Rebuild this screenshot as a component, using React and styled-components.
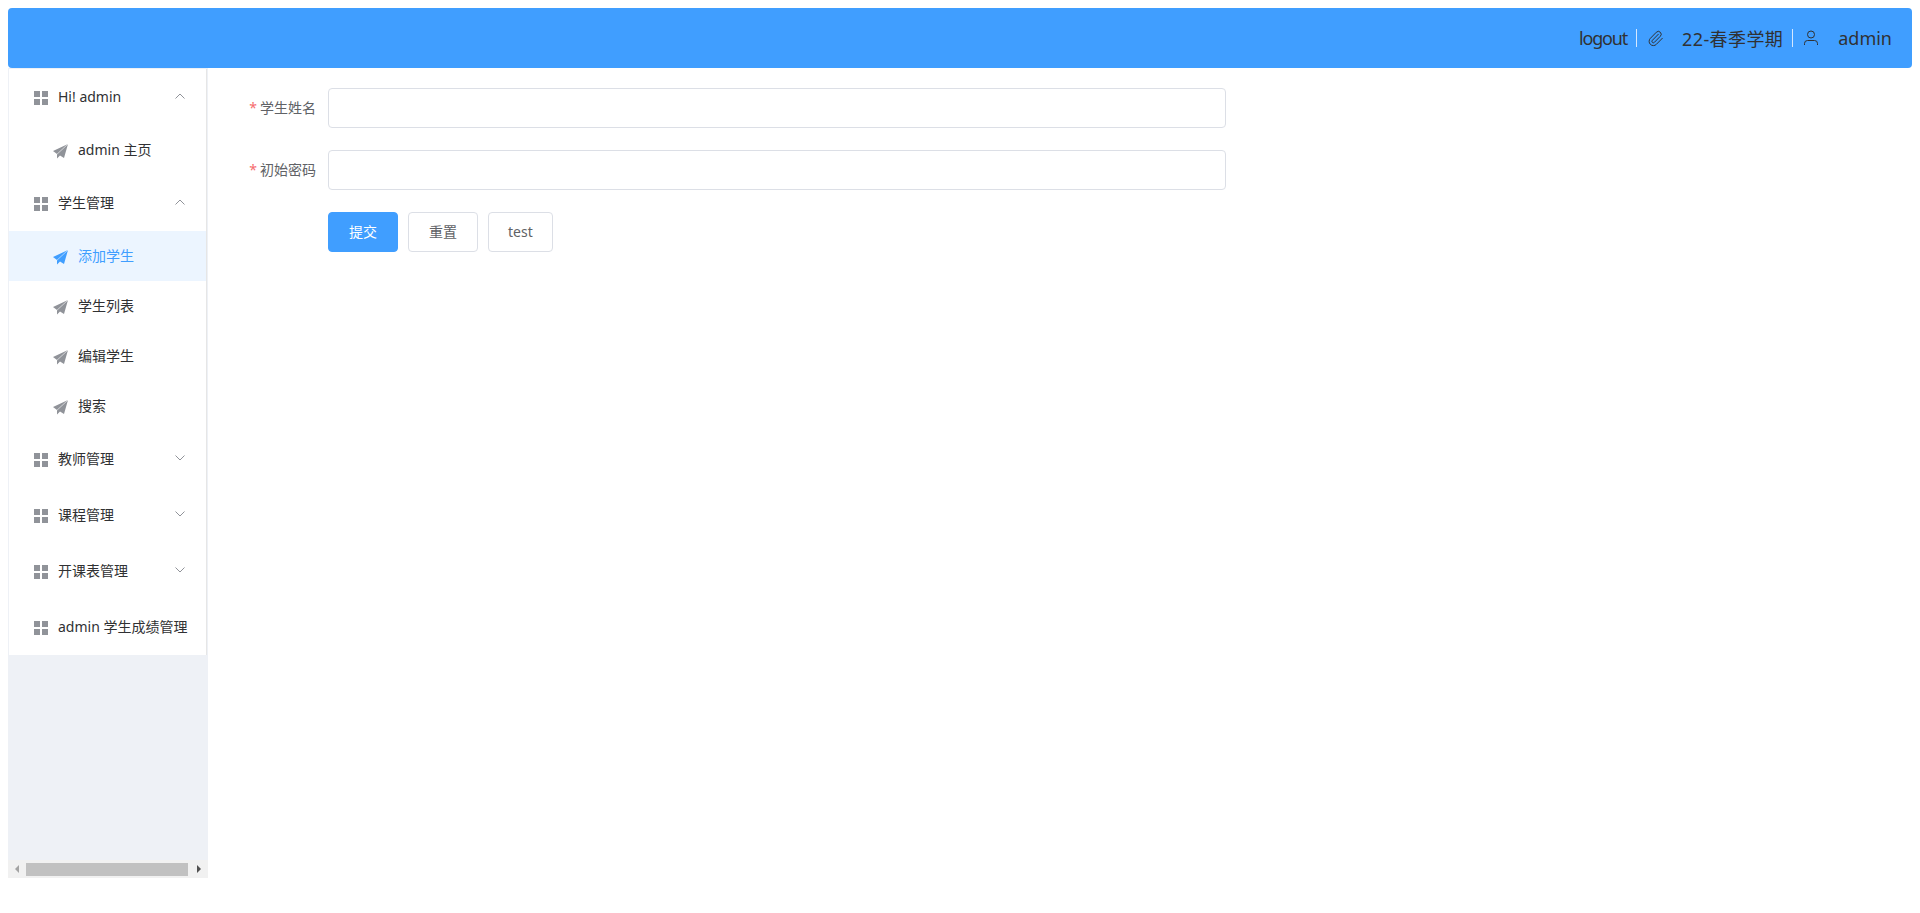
import styled, { createGlobalStyle } from "styled-components";
import { Paperclip } from "lucide-react";

const GlobalStyle = createGlobalStyle`
  body {
    margin: 8px;
    background: #fff;
    font-family: "Noto Sans", "Noto Sans CJK SC", "Liberation Sans", sans-serif;
    color: #303133;
  }
`;

const Page = styled.div`
  display: flex;
  flex-direction: column;
  width: 1904px;
`;

const Header = styled.header`
  display: flex;
  justify-content: flex-end;
  align-items: center;
  height: 60px;
  padding-right: 20px;
  box-sizing: border-box;
  background: #409eff;
  border-radius: 4px;
  font-size: 18px;
  color: #303133;
`;

const Logout = styled.span`
  letter-spacing: -1.2px;
`;

const Term = styled.span`
  letter-spacing: 0.4px;
`;

const Divider = styled.span`
  width: 1px;
  height: 18px;
  margin: 0 10px 0 9px;
  background: #d5e8ff;
`;

const HeaderIcon = styled.svg`
  width: 16px;
  height: 16px;
  margin-right: 19px;
  fill: none;
  stroke: #303133;
  stroke-width: 1;
`;

const ClipIcon = styled(Paperclip)`
  width: 17px;
  height: 17px;
  margin-right: 18px;
  color: #303133;
`;

const Body = styled.div`
  display: flex;
  height: 810px;
`;

const Aside = styled.aside`
  display: flex;
  flex-direction: column;
  flex: none;
  width: 200px;
  background: #eef1f6;
`;

const Menu = styled.nav`
  flex: 1;
`;

const MenuList = styled.ul`
  margin: 1px 1px 0;
  padding: 0;
  list-style: none;
  background: #fff;
  border-right: 1px solid #e6e6e6;
`;

const GroupTitle = styled.li`
  display: flex;
  align-items: center;
  height: 56px;
  padding-left: 25px;
  font-size: 14px;
  color: #303133;
  white-space: nowrap;
`;

const Item = styled.li`
  display: flex;
  align-items: center;
  height: 50px;
  padding-left: 44px;
  font-size: 14px;
  white-space: nowrap;
  color: ${(p) => (p.$active ? "#409eff" : "#303133")};
  background: ${(p) => (p.$active ? "#ecf5ff" : "#fff")};
`;

const MenuText = styled.span`
  margin-bottom: 2px;
`;

const GridIcon = styled.svg`
  flex: none;
  width: 14px;
  height: 14px;
  margin: 2px 10px 0 0;
  fill: #909399;
`;

const PlaneIcon = styled.svg`
  flex: none;
  width: 15px;
  height: 15px;
  margin: 3px 10px 0 0;
  fill: ${(p) => (p.$active ? "#409eff" : "#909399")};
`;

const PlaneFold = styled.path`
  fill: none;
  stroke: ${(p) => (p.$active ? "#ecf5ff" : "#fff")};
  stroke-width: 0.6;
`;

const Arrow = styled.svg`
  flex: none;
  width: 10px;
  height: 6px;
  margin-left: auto;
  margin-right: 21px;
  margin-top: -2px;
  fill: none;
  stroke: #909399;
  stroke-width: 1;
`;

const Scrollbar = styled.div`
  display: flex;
  align-items: center;
  height: 18px;
  background: #f1f1f1;
`;

const ScrollButton = styled.span`
  display: flex;
  flex: none;
  justify-content: center;
  width: 18px;
`;

const Triangle = styled.i`
  width: 0;
  height: 0;
  border-top: 4px solid transparent;
  border-bottom: 4px solid transparent;
  border-left: ${(p) => (p.$right ? "4px solid #505050" : "none")};
  border-right: ${(p) => (p.$right ? "none" : "4px solid #a3a3a3")};
`;

const Thumb = styled.span`
  flex: 1;
  height: 13px;
  margin-right: 2px;
  background: #c1c1c1;
`;

const Main = styled.main`
  flex: 1;
  padding: 20px;
`;

const Form = styled.form`
  width: 998px;
`;

const Row = styled.div`
  display: flex;
  align-items: center;
  margin-bottom: 22px;
  padding-left: ${(p) => (p.$buttons ? "100px" : "0")};
  gap: ${(p) => (p.$buttons ? "10px" : "0")};
`;

const Label = styled.label`
  flex: none;
  width: 100px;
  margin-bottom: 2px;
  padding-right: 12px;
  box-sizing: border-box;
  text-align: right;
  font-size: 14px;
  color: #606266;
  &::before {
    content: "*";
    margin-right: 3px;
    color: #f56c6c;
  }
`;

const Input = styled.input`
  flex: 1;
  height: 40px;
  padding: 0 15px;
  box-sizing: border-box;
  border: 1px solid #dcdfe6;
  border-radius: 4px;
  outline: none;
`;

const Button = styled.button`
  height: 40px;
  padding: 0 ${(p) => (p.$tight ? "19px" : "20px")} 2px;
  font-family: inherit;
  font-size: 14px;
  border-radius: 4px;
  border: 1px solid ${(p) => (p.$primary ? "#409eff" : "#dcdfe6")};
  background: ${(p) => (p.$primary ? "#409eff" : "#fff")};
  color: ${(p) => (p.$primary ? "#fff" : "#606266")};
`;

const Grid = () => (
  <GridIcon viewBox="0 0 14 14">
    <rect x="0" y="0" width="6" height="6" />
    <rect x="8" y="0" width="6" height="6" />
    <rect x="0" y="8" width="6" height="6" />
    <rect x="8" y="8" width="6" height="6" />
  </GridIcon>
);

const Plane = ({ active }) => (
  <PlaneIcon $active={active} viewBox="0 0 15 15">
    <path d="M15 0 0 7l4 3v4.5l3-3 4 2.5z" />
    <PlaneFold $active={active} d="M15 0 4 10.2" />
  </PlaneIcon>
);

const Chevron = ({ open }) => (
  <Arrow viewBox="0 0 10 6">
    <path d={open ? "M.5 5.5 5 1l4.5 4.5" : "M.5.5 5 5 9.5.5"} />
  </Arrow>
);

const Group = ({ title, open, arrow = true }) => (
  <GroupTitle>
    <Grid />
    <MenuText>{title}</MenuText>
    {arrow && <Chevron open={open} />}
  </GroupTitle>
);

const Leaf = ({ children, active }) => (
  <Item $active={active}>
    <Plane active={active} />
    <MenuText>{children}</MenuText>
  </Item>
);

export default function App() {
  return (
    <Page>
      <GlobalStyle />
      <Header>
        <Logout>logout</Logout>
        <Divider />
        <ClipIcon strokeWidth={1.4} />
        <Term>22-春季学期</Term>
        <Divider />
        <HeaderIcon viewBox="0 0 16 16">
          <circle cx="8" cy="4.5" r="3.5" />
          <path d="M1.5 15v-1.5a3 3 0 0 1 3-3h7a3 3 0 0 1 3 3V15" />
        </HeaderIcon>
        <span>admin</span>
      </Header>
      <Body>
        <Aside>
          <Menu>
            <MenuList>
              <Group title="Hi! admin" open />
              <Leaf>admin 主页</Leaf>
              <Group title="学生管理" open />
              <Leaf active>添加学生</Leaf>
              <Leaf>学生列表</Leaf>
              <Leaf>编辑学生</Leaf>
              <Leaf>搜索</Leaf>
              <Group title="教师管理" />
              <Group title="课程管理" />
              <Group title="开课表管理" />
              <Group title="admin 学生成绩管理" arrow={false} />
            </MenuList>
          </Menu>
          <Scrollbar>
            <ScrollButton><Triangle /></ScrollButton>
            <Thumb />
            <ScrollButton><Triangle $right /></ScrollButton>
          </Scrollbar>
        </Aside>
        <Main>
          <Form>
            <Row>
              <Label>学生姓名</Label>
              <Input />
            </Row>
            <Row>
              <Label>初始密码</Label>
              <Input type="password" />
            </Row>
            <Row $buttons>
              <Button type="button" $primary>提交</Button>
              <Button type="button">重置</Button>
              <Button type="button" $tight>test</Button>
            </Row>
          </Form>
        </Main>
      </Body>
    </Page>
  );
}
